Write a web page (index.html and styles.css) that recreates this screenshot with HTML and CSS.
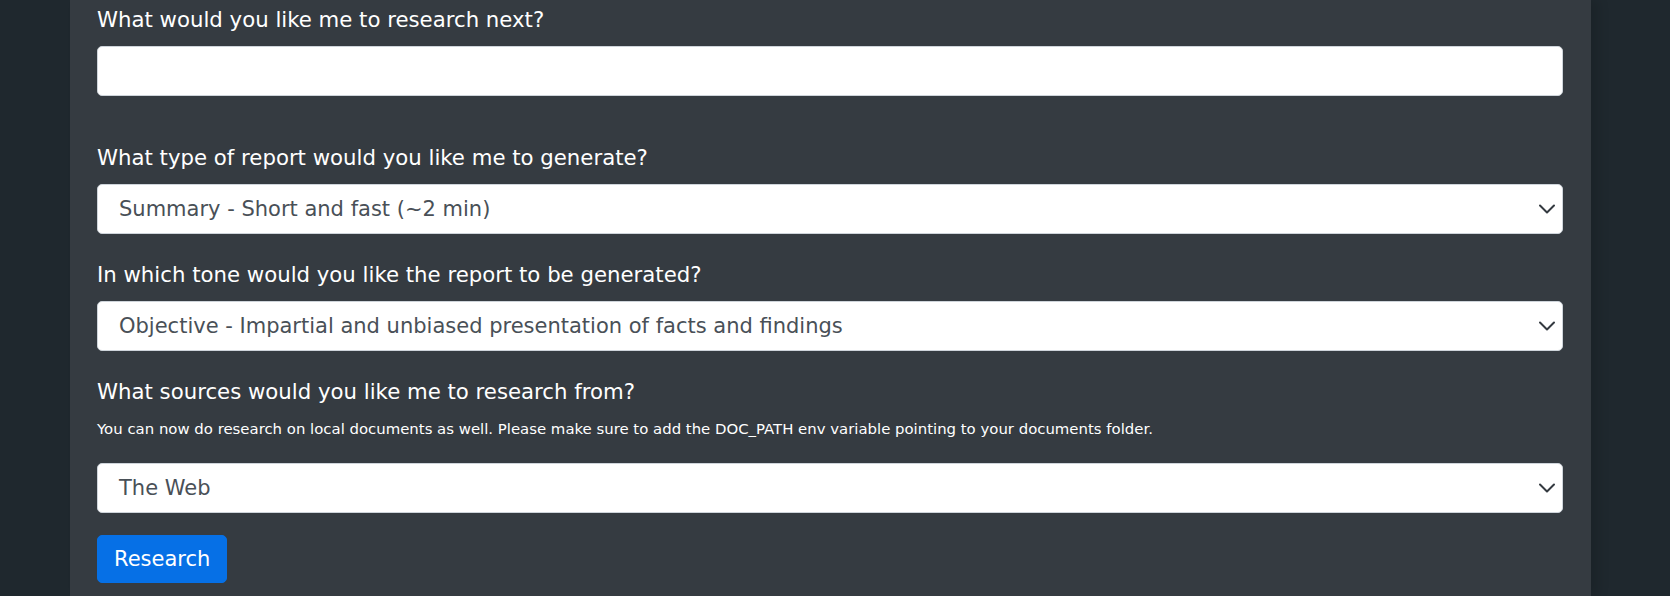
FILE: index.html
```html
<!DOCTYPE html>
<html lang="en">
<head>
<meta charset="utf-8">
<title>Research</title>
<link rel="stylesheet" href="styles.css">
</head>
<body>
<div class="page">
  <main class="panel">
    <form class="form">
      <label class="label">What would you like me to research next?</label>
      <div class="input input-task"></div>

      <label class="label">What type of report would you like me to generate?</label>
      <div class="select">
        <span class="select-text">Summary - Short and fast (~2 min)</span>
        <svg class="chev" width="16" height="10" viewBox="0 0 16 10"><path d="M1 1.5l7 7 7-7" fill="none" stroke="#343a40" stroke-width="2" stroke-linecap="round" stroke-linejoin="round"/></svg>
      </div>

      <label class="label">In which tone would you like the report to be generated?</label>
      <div class="select">
        <span class="select-text">Objective - Impartial and unbiased presentation of facts and findings</span>
        <svg class="chev" width="16" height="10" viewBox="0 0 16 10"><path d="M1 1.5l7 7 7-7" fill="none" stroke="#343a40" stroke-width="2" stroke-linecap="round" stroke-linejoin="round"/></svg>
      </div>

      <label class="label label-sources">What sources would you like me to research from?</label>
      <p class="hint">You can now do research on local documents as well. Please make sure to add the DOC_PATH env variable pointing to your documents folder.</p>
      <div class="select select-last">
        <span class="select-text">The Web</span>
        <svg class="chev" width="16" height="10" viewBox="0 0 16 10"><path d="M1 1.5l7 7 7-7" fill="none" stroke="#343a40" stroke-width="2" stroke-linecap="round" stroke-linejoin="round"/></svg>
      </div>

      <button type="button" class="btn">Research</button>
    </form>
  </main>
</div>
</body>
</html>
```

FILE: styles.css
```css
* { box-sizing: border-box; }

html, body {
  margin: 0;
  padding: 0;
  height: 100%;
}

body {
  background: #1f282e;
  font-family: "DejaVu Sans", "Liberation Sans", sans-serif;
  overflow: hidden;
}

.page {
  height: 596px;
  padding-left: 70px;
}

.panel {
  width: 1521px;
  height: 100%;
  background: #353b41;
  padding: 5px 28px 0 27px;
  box-shadow: 8px 0 10px rgba(0, 0, 0, 0.12);
}

.form {
  display: flex;
  flex-direction: column;
  align-items: stretch;
}

.label {
  display: block;
  color: #ffffff;
  font-size: 21.25px;
  line-height: 30px;
  margin-bottom: 11px;
}

.input,
.select {
  height: 50px;
  background: #ffffff;
  border: 1px solid #ced4da;
  border-radius: 5px;
}

.input-task {
  margin-bottom: 47px;
}

.select {
  display: flex;
  align-items: center;
  justify-content: space-between;
  padding: 0 7px 0 21px;
  margin-bottom: 26px;
}

.select-text {
  color: #495057;
  font-size: 21px;
  line-height: 30px;
}

.chev {
  display: block;
  flex: none;
}

.label-sources {
  margin-bottom: 12px;
}

.hint {
  margin: 0 0 23px;
  color: #ffffff;
  font-size: 14.9px;
  line-height: 21px;
}

.select-last {
  margin-bottom: 22px;
}

.btn {
  align-self: flex-start;
  height: 48px;
  padding: 0 16px;
  background: #0670e6;
  color: #ffffff;
  border: 1px solid #0670e6;
  border-radius: 5px;
  font-family: "DejaVu Sans", "Liberation Sans", sans-serif;
  font-size: 21px;
  line-height: 30px;
  cursor: pointer;
}
```
